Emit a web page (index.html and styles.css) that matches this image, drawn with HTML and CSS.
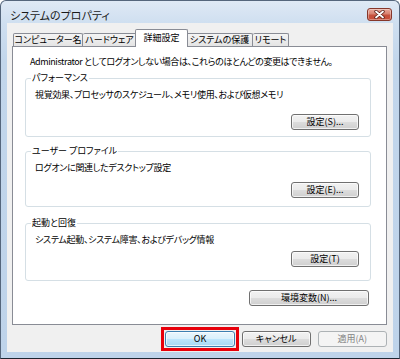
FILE: index.html
```html
<!DOCTYPE html>
<html lang="ja">
<head>
<meta charset="utf-8">
<title>システムのプロパティ</title>
<link rel="stylesheet" href="styles.css">
</head>
<body>
<div class="window">
  <div class="titlebar">
    <span class="title">システムのプロパティ</span>
    <span class="close">
      <svg width="11" height="9" viewBox="0 0 11 9">
        <path d="M2 1.5 L9 7.5 M9 1.5 L2 7.5" stroke="#5a2018" stroke-width="3.4" stroke-linecap="round"/>
        <path d="M2 1.5 L9 7.5 M9 1.5 L2 7.5" stroke="#ffffff" stroke-width="1.8" stroke-linecap="round"/>
      </svg>
    </span>
  </div>
  <div class="client">
    <div class="tabs">
      <span class="tab t1">コンピューター名</span>
      <span class="tab t2">ハードウェア</span>
      <span class="tab t3 active">詳細設定</span>
      <span class="tab t4">システムの保護</span>
      <span class="tab t5">リモート</span>
    </div>
    <div class="panel">
      <p class="intro">Administrator としてログオンしない場合は、これらのほとんどの変更はできません。</p>
      <fieldset class="group g1">
        <legend>パフォーマンス</legend>
        <p class="desc">視覚効果、プロセッサのスケジュール、メモリ使用、および仮想メモリ</p>
        <div class="row"><button class="btn set">設定(S)...</button></div>
      </fieldset>
      <fieldset class="group g2">
        <legend>ユーザー プロファイル</legend>
        <p class="desc">ログオンに関連したデスクトップ設定</p>
        <div class="row"><button class="btn set">設定(E)...</button></div>
      </fieldset>
      <fieldset class="group g3">
        <legend>起動と回復</legend>
        <p class="desc">システム起動、システム障害、およびデバッグ情報</p>
        <div class="row"><button class="btn set">設定(T)</button></div>
      </fieldset>
      <div class="row env"><button class="btn wide">環境変数(N)...</button></div>
    </div>
    <div class="actions">
      <span class="focus"><button class="btn default">OK</button></span>
      <button class="btn cancel">キャンセル</button>
      <button class="btn" disabled>適用(A)</button>
    </div>
  </div>
</div>
</body>
</html>
```

FILE: styles.css
```css
* { box-sizing: border-box; }
html, body { margin: 0; padding: 0; }
body {
  width: 400px;
  height: 359px;
  overflow: hidden;
  background: #ffffff;
  font-family: "Noto Sans CJK JP", "Liberation Sans", sans-serif;
  font-size: 9px;
  line-height: 12px;
  color: #000;
  font-feature-settings: "palt";
}
.window {
  width: 400px;
  height: 359px;
  border: 1px solid #55667c;
  border-bottom-color: #1c2430;
  border-radius: 6px 6px 0 0;
  background: linear-gradient(#dfe9f5 0px, #cfdff0 22px, #c2d6eb 60px, #bed3ea 100%);
  display: flex;
  flex-direction: column;
  padding: 0 6px 6px;
}
.titlebar {
  height: 22px;
  display: flex;
  align-items: flex-start;
  flex: none;
}
.title {
  margin-top: 8px;
  padding-left: 3px;
  font-size: 11px;
  line-height: 12px;
  color: #1a1a1a;
}
.close {
  margin-left: auto;
  margin-right: 1px;
  margin-top: 7px;
  width: 25px;
  height: 13px;
  border: 1px solid #86372a;
  border-radius: 3px;
  background: linear-gradient(#e9a89b 0%, #d9826f 45%, #c6513d 55%, #c94f38 100%);
  box-shadow: inset 0 0 0 1px rgba(255,255,255,0.35);
  display: flex;
  align-items: center;
  justify-content: center;
}
.close svg { display: block; }
.client {
  flex: 1;
  background: #f0f0f0;
  display: flex;
  flex-direction: column;
  padding: 6px 6px 5px 5px;
}
.tabs {
  display: flex;
  height: 18px;
  margin-bottom: -1px;
  flex: none;
  padding-left: 1px;
}
.tab {
  height: 13px;
  margin-top: 4px;
  border: 1px solid #898c95;
  border-bottom: none;
  border-radius: 2px 2px 0 0;
  background: linear-gradient(#f4f4f4, #e4e4e4);
  text-align: center;
  line-height: 12px;
  white-space: nowrap;
}
.tab + .tab { border-left: none; }
.t1 { width: 70px; }
.t2 { width: 54px; }
.t3 { width: 53px; }
.t4 { width: 67px; }
.t5 { width: 36px; }
.tab.active {
  height: 18px;
  margin-top: 0;
  margin-left: -2px;
  margin-right: -2px;
  border-left: 1px solid #898c95;
  background: #ffffff;
  position: relative;
  z-index: 1;
  padding-top: 2px;
}
.tab.active + .tab { border-left: 1px solid #898c95; }
.panel {
  flex: 1;
  border: 1px solid #898c95;
  background: #ffffff;
  padding: 9px 15px 0 12px;
  display: flex;
  flex-direction: column;
}
.intro {
  margin: 0 0 4px 5px;
  white-space: nowrap;
  letter-spacing: -0.4px;
}
.group {
  margin: 0 0 8px 0;
  border: 1px solid #d5dfe5;
  border-radius: 3px;
  padding: 0 11px 6px 5px;
  min-width: 0;
}
.group legend {
  padding: 0 1px;
  line-height: 12px;
}
.desc {
  margin: 5px 0 0 4px;
  white-space: nowrap;
  letter-spacing: -0.3px;
}
.row {
  display: flex;
  justify-content: flex-end;
}
.group .row { margin-top: 13px; }
.g2 { padding-bottom: 8px; margin-bottom: 10px; }
.g2 .row { margin-top: 8px; }
.g3 { padding-bottom: 13px; margin-bottom: 9px; }
.g3 .row { margin-top: 5px; }
.env { margin-right: 2px; }
.btn {
  font: inherit;
  font-feature-settings: "palt";
  height: 16px;
  padding: 0;
  border: 1px solid #707070;
  border-radius: 3px;
  background: linear-gradient(#f2f2f2 0%, #ebebeb 50%, #dddddd 50%, #cfcfcf 100%);
  box-shadow: inset 0 0 0 1px rgba(255,255,255,0.7);
  color: #000;
  line-height: 12px;
  text-align: center;
  width: 70px;
}
.btn.set { width: 68px; }
.btn.wide { width: 120px; }
.btn.default {
  border-color: #3c7fb1;
  background: linear-gradient(#eaf6fd 0%, #d9f0fc 50%, #bee6fd 50%, #a7d9f5 100%);
  display: block;
}
.focus {
  display: block;
  border: 3px solid #e8000b;
  padding: 1px;
  margin-right: 3px;
}
.btn.cancel { margin-right: 7px; }
.btn:disabled {
  border-color: #adb2b5;
  background: #f4f4f4;
  box-shadow: none;
  color: #838383;
  width: 71px;
}
.actions {
  display: flex;
  align-items: center;
  height: 16px;
  margin-top: 6px;
  padding-left: 149px;
  flex: none;
}
```
